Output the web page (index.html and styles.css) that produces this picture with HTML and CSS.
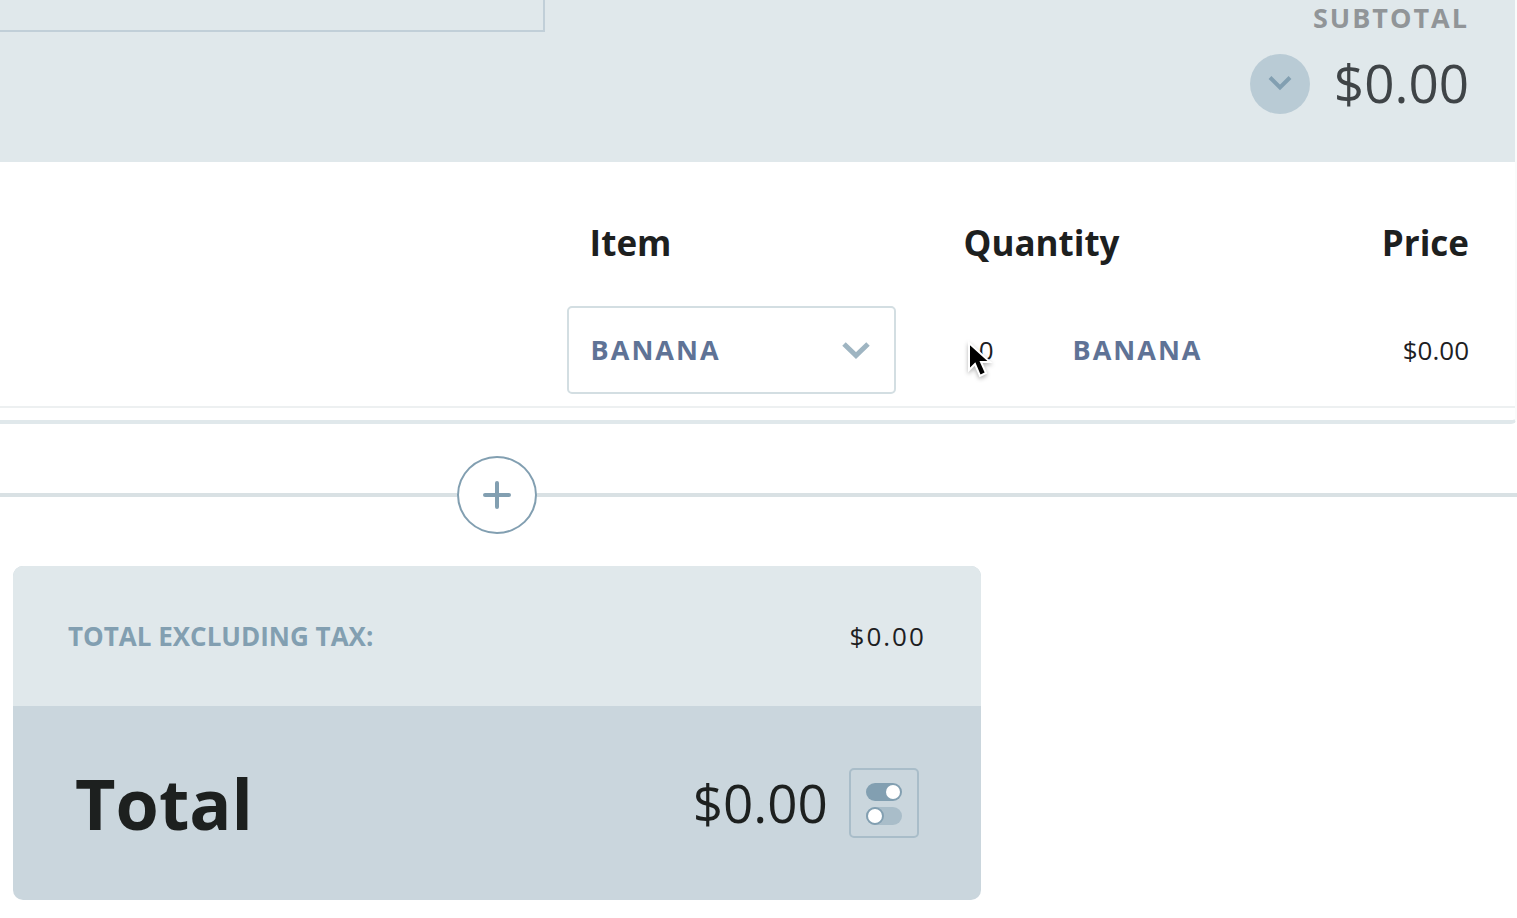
FILE: index.html
```
<!DOCTYPE html>
<html lang="en">
<head>
  <meta charset="UTF-8" />
  <meta name="viewport" content="width=device-width, initial-scale=1" />
  <title>Quote</title>
  <link rel="stylesheet" href="styles.css">
</head>
<body>
  <section class="card">
    <header class="card-header">
      <input class="name-input" type="text" aria-label="Section name">
      <div class="subtotal">
        <div class="subtotal-label">SUBTOTAL</div>
        <div class="subtotal-row">
          <button class="collapse" type="button" aria-label="Toggle items">
            <svg width="24" height="16" viewBox="0 0 24 16"><path d="M2 1.5 12 11.5 22 1.5" fill="none" stroke="#829fb1" stroke-width="4"/></svg>
          </button>
          <span class="amount muted">$0.00</span>
        </div>
      </div>
    </header>

    <table class="items">
      <thead>
        <tr>
          <td class="col-space"></td>
          <th class="col-item">Item</th>
          <th class="col-quantity">Quantity</th>
          <th class="col-price">Price</th>
        </tr>
      </thead>
      <tbody>
        <tr>
          <td></td>
          <td>
            <div class="select">
              <select aria-label="Item">
                <option>BANANA</option>
              </select>
              <svg class="select-arrow" width="28" height="18" viewBox="0 0 28 18"><path d="M2 2 14 13.5 26 2" fill="none" stroke="#9fb5c2" stroke-width="5"/></svg>
            </div>
          </td>
          <td>
            <div class="quantity">
              <input class="quantity-input" type="text" value="0" aria-label="Quantity">
              <span class="unit">BANANA</span>
              <svg class="pointer" width="30" height="44" viewBox="0 0 30 44"><path d="M4 3v27l6-6 5 12 6-3-5-11h9z" fill="#000" stroke="#fff" stroke-width="2"/></svg>
            </div>
          </td>
          <td class="col-price">$0.00</td>
        </tr>
      </tbody>
    </table>
  </section>

  <div class="divider">
    <button class="add" type="button" aria-label="Add section">
      <svg width="28" height="28" viewBox="0 0 28 28"><path d="M14 2v24M2 14h24" stroke="#829fb1" stroke-width="4" stroke-linecap="round"/></svg>
    </button>
  </div>

  <section class="totals">
    <div class="totals-tax">
      <span class="totals-label">TOTAL EXCLUDING TAX:</span>
      <span class="totals-value">$0.00</span>
    </div>
    <div class="totals-main">
      <h2>Total</h2>
      <span class="amount">$0.00</span>
      <button class="options" type="button" aria-label="Total options">
        <svg width="36" height="44" viewBox="0 0 36 44">
          <rect x="0" y="2" width="36" height="18" rx="9" fill="#829fb1"/>
          <circle cx="27" cy="11" r="7" fill="#fff"/>
          <rect x="0" y="26" width="36" height="18" rx="9" fill="#a9bdc9"/>
          <circle cx="9" cy="35" r="8" fill="#fff" stroke="#829fb1" stroke-width="2"/>
        </svg>
      </button>
    </div>
  </section>
</body>
</html>
```
FILE: styles.css
```
* {
  box-sizing: border-box;
}
body {
  margin: 0;
  background: #fff;
  font-family: "Open Sans", "Noto Sans", sans-serif;
  font-size: 26px;
  line-height: 36px;
  color: #1d201f;
}
button,
input,
select {
  font: inherit;
  color: inherit;
}
button {
  display: flex;
  align-items: center;
  justify-content: center;
  padding: 0;
  cursor: pointer;
}

/* Card */
.card {
  padding-bottom: 12px;
  border-right: 2px solid #fafbfb;
  border-bottom: 4px solid #e0e8eb;
  border-bottom-right-radius: 6px;
}
.card-header {
  display: flex;
  justify-content: space-between;
  align-items: flex-start;
  padding: 0 46px 48px 0;
  background: #e0e8eb;
}
.name-input {
  width: 37.1%;
  height: 32px;
  padding: 0 24px;
  border: solid #c1cfd8;
  border-width: 0 2px 2px 0;
  background: transparent;
}
.subtotal-label {
  font-size: 27px;
  font-weight: 700;
  letter-spacing: 2px;
  text-align: right;
  color: #919598;
}
.subtotal-row {
  display: flex;
  align-items: flex-start;
  gap: 24px;
  margin-top: 18px;
}
.collapse {
  width: 60px;
  height: 60px;
  border: none;
  border-radius: 50%;
  background: #b9cbd5;
}
.amount {
  font-size: 53px;
  line-height: 58px;
}
.muted {
  color: #3f4447;
}

/* Items table */
.items {
  width: 100%;
  table-layout: fixed;
  border-collapse: collapse;
}
.items th,
.items td {
  padding: 40px 0 12px;
  text-align: left;
}
.items thead th,
.items thead td {
  padding: 58px 0 0;
  font-size: 35px;
  line-height: 46px;
}
.items tbody tr {
  border-bottom: 2px solid #edf0f1;
}
.items .col-space {
  width: 37.4%;
}
.items .col-item {
  width: 26.2%;
  padding-left: 23px;
}
.items .col-price {
  padding-right: 46px;
  text-align: right;
}
.select {
  position: relative;
  width: 83%;
}
.select select {
  display: block;
  width: 100%;
  height: 88px;
  padding: 0 64px 0 22px;
  border: 2px solid #d3dee2;
  border-radius: 5px;
  background: transparent;
  appearance: none;
  font-size: 27px;
  font-weight: 700;
  letter-spacing: 2px;
  color: #5f7396;
}
.select-arrow {
  position: absolute;
  top: 36px;
  right: 26px;
  pointer-events: none;
}
.quantity {
  position: relative;
  display: flex;
  align-items: center;
  gap: 79px;
}
.quantity-input {
  width: 30px;
  padding: 0;
  border: none;
  background: transparent;
  text-align: right;
}
.unit {
  font-size: 27px;
  font-weight: 700;
  letter-spacing: 2px;
  color: #5f7396;
}
.pointer {
  position: absolute;
  top: 8px;
  left: 1px;
  filter: drop-shadow(0 2px 2px rgba(0, 0, 0, 0.3));
}

/* Divider with add button */
.divider {
  display: flex;
  align-items: center;
  margin: 32px 0;
}
.divider::before,
.divider::after {
  content: "";
  flex: 7;
  height: 4px;
  background: #d9e1e4;
}
.divider::after {
  flex: 15;
}
.add {
  width: 80px;
  height: 78px;
  border: 2px solid #829fb1;
  border-radius: 50%;
  background: #fff;
}

/* Totals */
.totals {
  width: 63.8%;
  margin: 0 13px 18px;
  border-radius: 10px;
  overflow: hidden;
  background: #cad6dd;
}
.totals-tax {
  display: flex;
  justify-content: space-between;
  padding: 52px 55px;
  background: #e0e8eb;
}
.totals-label {
  font-weight: 700;
  color: #829fb1;
}
.totals-value {
  letter-spacing: 2px;
}
.totals-main {
  display: flex;
  align-items: center;
  gap: 21px;
  padding: 47px 62px;
}
.totals-main h2 {
  flex: 1;
  margin: 0;
  font-size: 70px;
  line-height: 100px;
}
.options {
  width: 70px;
  height: 70px;
  border: 2px solid #a9bdc9;
  border-radius: 5px;
  background: transparent;
}
```
